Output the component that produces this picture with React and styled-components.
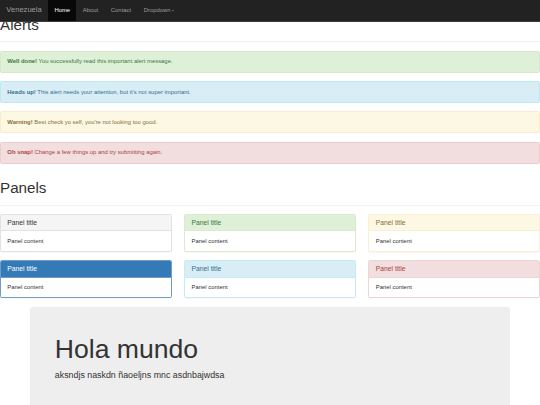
import React from 'react';
import styled, { createGlobalStyle } from 'styled-components';

const GlobalStyle = createGlobalStyle`
    html, body {
        margin: 0;
        padding: 0;
        background: #fff;
    }
    body {
        font-family: "Liberation Sans", Arial, sans-serif;
        font-size: 5.9px;
        line-height: 8.44px;
        color: #333;
    }
    * {
        box-sizing: border-box;
    }
`;

const Navbar = styled.nav`
    position: fixed;
    top: 0;
    left: 0;
    right: 0;
    z-index: 10;
    height: 21.5px;
    display: flex;
    align-items: stretch;
    background: #222;
    border-bottom: 1px solid #3b3b3b;
`;

const Brand = styled.a`
    display: flex;
    align-items: center;
    padding: 0 6.33px;
    font-size: 7.59px;
    color: #9d9d9d;
    text-decoration: none;
`;

const NavList = styled.ul`
    display: flex;
    margin: 0;
    padding: 0;
    list-style: none;
`;

const NavItem = styled.li`
    display: flex;
    align-items: center;
    padding: 0 6.33px;
    font-size: 5.9px;
    color: ${props => props.active ? '#fff' : '#9d9d9d'};
    background: ${props => props.active ? '#080808' : 'transparent'};
`;

const Caret = styled.span`
    display: inline-block;
    width: 0;
    height: 0;
    margin-left: 1.2px;
    border-top: 1.8px solid #9d9d9d;
    border-left: 1.8px solid transparent;
    border-right: 1.8px solid transparent;
    vertical-align: middle;
`;

const PageHeader = styled.div`
    margin: 16.9px 0 8.44px;
    padding-bottom: 3.3px;
    border-bottom: 1px solid #f3f3f3;
`;

const H1 = styled.h1`
    margin: 0 0 4.22px;
    font-size: 15.19px;
    line-height: 16.7px;
    font-weight: 400;
    color: #333;
`;

const alertColors = {
    success: { bg: '#dff0d8', border: '#d6e9c6', color: '#3c763d' },
    info: { bg: '#d9edf7', border: '#bce8f1', color: '#31708f' },
    warning: { bg: '#fcf8e3', border: '#faebcc', color: '#8a6d3b' },
    danger: { bg: '#f2dede', border: '#ebccd1', color: '#a94442' },
};

const Alert = styled.div`
    padding: 5.8px 6.33px;
    margin-bottom: 8.3px;
    border: 1px solid ${props => alertColors[props.kind].border};
    border-radius: 1.7px;
    background: ${props => alertColors[props.kind].bg};
    color: ${props => alertColors[props.kind].color};
    font-size: 5.9px;
    line-height: 8.44px;

    strong {
        font-weight: 700;
    }
`;

const PanelGrid = styled.div`
    display: grid;
    grid-template-columns: repeat(3, 1fr);
    column-gap: 12.66px;
    row-gap: 8.44px;
    margin-bottom: 8.44px;
`;

const panelColors = {
    default: { border: '#e2e2e2', heading: '#f5f5f5', color: '#333' },
    primary: { border: '#6f9ccb', heading: '#337ab7', color: '#fff' },
    success: { border: '#d9ebca', heading: '#dff0d8', color: '#3c763d' },
    info: { border: '#c6ecf3', heading: '#d9edf7', color: '#31708f' },
    warning: { border: '#fbeed3', heading: '#fcf8e3', color: '#8a6d3b' },
    danger: { border: '#eed3d7', heading: '#f2dede', color: '#a94442' },
};

const Panel = styled.div`
    border: 1px solid ${props => panelColors[props.kind].border};
    border-radius: 1.7px;
    background: #fff;
    box-shadow: 0 0.42px 0.42px rgba(0, 0, 0, 0.05);
    overflow: hidden;
`;

const PanelHeading = styled.div`
    padding: 3.9px 6.33px;
    background: ${props => panelColors[props.kind].heading};
    color: ${props => panelColors[props.kind].color};
    border-bottom: 1px solid ${props => panelColors[props.kind].border};
`;

const PanelTitle = styled.h3`
    margin: 0;
    font-size: 6.75px;
    line-height: 7.43px;
    font-weight: 400;
    color: inherit;
`;

const PanelBody = styled.div`
    padding: 5.6px 6.33px;
    font-size: 5.9px;
    line-height: 8.44px;
`;

const Jumbotron = styled.div`
    margin: 0 29.53px 12.66px;
    padding: 20.25px 25.3px;
    background: #eee;
    border-radius: 2.53px;
`;

const JumboTitle = styled.h1`
    margin: 8.44px 0 4.22px;
    font-size: 26.58px;
    line-height: 29.24px;
    font-weight: 400;
    color: #333;
`;

const Lead = styled.p`
    margin: 0 0 6.33px;
    font-size: 8.86px;
    line-height: 12.66px;
    color: #333;
`;

const alerts = [
    { kind: 'success', strong: 'Well done!', text: 'You successfully read this important alert message.' },
    { kind: 'info', strong: 'Heads up!', text: "This alert needs your attention, but it's not super important." },
    { kind: 'warning', strong: 'Warning!', text: "Best check yo self, you're not looking too good." },
    { kind: 'danger', strong: 'Oh snap!', text: 'Change a few things up and try submitting again.' },
];

const panels = ['default', 'success', 'warning', 'primary', 'info', 'danger'];

export default function App() {
    return (
        <>
            <GlobalStyle />
            <Navbar>
                <Brand href="#">Venezuela</Brand>
                <NavList>
                    <NavItem active>Home</NavItem>
                    <NavItem>About</NavItem>
                    <NavItem>Contact</NavItem>
                    <NavItem>Dropdown <Caret /></NavItem>
                </NavList>
            </Navbar>

            <PageHeader>
                <H1>Alerts</H1>
            </PageHeader>
            {alerts.map((a) =>
                <Alert key={a.kind} kind={a.kind}>
                    <strong>{a.strong}</strong> {a.text}
                </Alert>
            )}

            <PageHeader>
                <H1>Panels</H1>
            </PageHeader>
            <PanelGrid>
                {panels.map((kind) =>
                    <Panel key={kind} kind={kind}>
                        <PanelHeading kind={kind}>
                            <PanelTitle>Panel title</PanelTitle>
                        </PanelHeading>
                        <PanelBody>Panel content</PanelBody>
                    </Panel>
                )}
            </PanelGrid>

            <Jumbotron>
                <JumboTitle>Hola mundo</JumboTitle>
                <Lead>aksndjs naskdn ñaoeljns mnc asdnbajwdsa</Lead>
            </Jumbotron>
        </>
    );
}
